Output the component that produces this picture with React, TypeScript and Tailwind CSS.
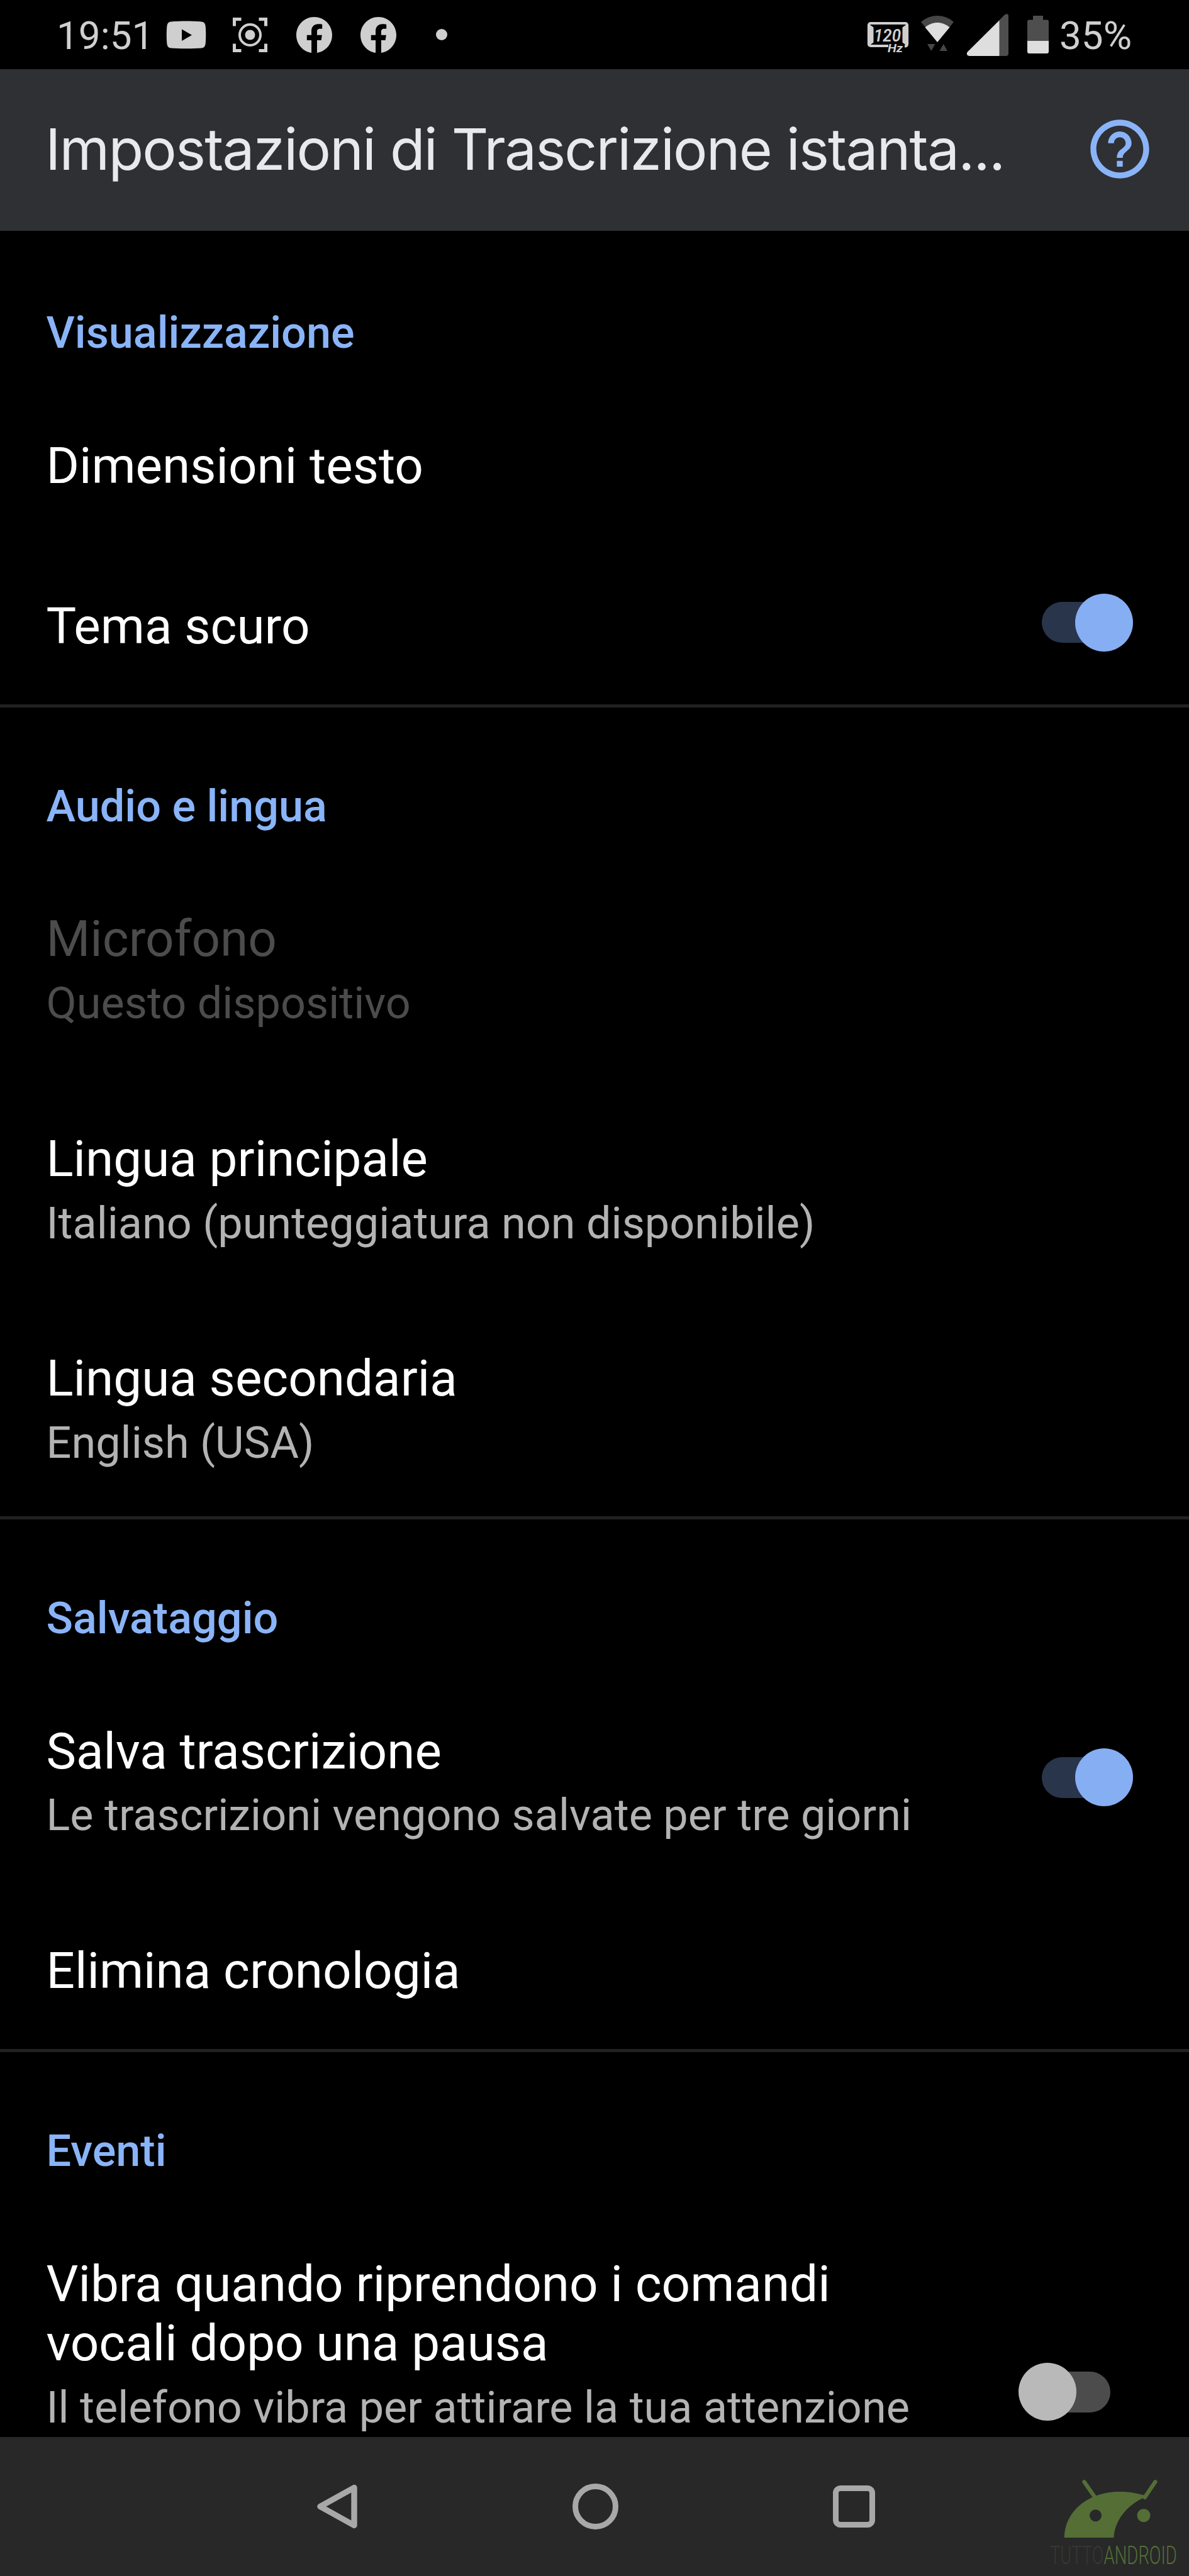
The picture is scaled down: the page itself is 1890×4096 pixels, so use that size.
import type { ReactNode } from 'react';
import { MdHelpOutline } from 'react-icons/md';

const YoutubeIcon = () => (
  <svg className="ml-[27px] h-[45px] w-[64px]" viewBox="0 0 64 45" fill="#cfcfcf">
    <path
      fillRule="evenodd"
      d="M8 1.500C20 .2 44 .2 56 1.500c4 .4 6 2.500 6.500 6 1 8 1 22 0 30-.5 3.500-2.500 5.600-6.500 6-12 1-36 1-48 0-4-.4-6-2.500-6.500-6-1-8-1-22 0-30C2 4 4 1.900 8 1.500ZM25 13.500v18.400l16-9.200Z"
    />
  </svg>
);

const CaptureIcon = () => (
  <svg className="ml-[42px] size-[55px]" viewBox="0 0 55 55" fill="none" stroke="#cfcfcf">
    <path d="M2.500 13.500v-11h11M41.500 2.500h11v11M52.500 41.500v11h-11M13.500 52.500h-11v-11" strokeWidth="5" />
    <circle cx="27.500" cy="27.500" r="16.500" strokeWidth="4" />
    <circle cx="27.500" cy="27.500" r="8" fill="#cfcfcf" stroke="none" />
  </svg>
);

const FacebookIcon = ({ className }: { className: string }) => (
  <svg className={className} viewBox="0 0 24 24" fill="#cfcfcf">
    <path d="M24 12.073C24 5.405 18.627 0 12 0S0 5.405 0 12.073C0 18.100 4.388 23.094 10.125 24v-8.437H7.078v-3.490h3.047v-2.660c0-3.025 1.792-4.697 4.533-4.697 1.312 0 2.686.236 2.686.236v2.971h-1.513c-1.491 0-1.956.93-1.956 1.886v2.264h3.328l-.532 3.490h-2.796V24C19.612 23.094 24 18.100 24 12.073Z" />
  </svg>
);

const RefreshRateIcon = () => (
  <svg className="mt-[8px] h-[48px] w-[65px] overflow-visible" viewBox="0 0 65 48">
    <path
      d="M33 38H5a3 3 0 0 1-3-3V5a3 3 0 0 1 3-3h55a3 3 0 0 1 3 3v30q0 3.500-4 3.500"
      fill="none"
      stroke="#cfcfcf"
      strokeWidth="4.200"
    />
    <path d="M3 5l5.500 4v23L3 36ZM62 5l-5.500 4v23l5.500 4Z" fill="#cfcfcf" stroke="#cfcfcf" strokeWidth="2" />
    <text
      x="10"
      y="30.500"
      fill="#cfcfcf"
      fontSize="27"
      fontWeight="600"
      fontStyle="italic"
      textLength="43"
      lengthAdjust="spacingAndGlyphs"
    >
      120
    </text>
    <text
      x="32"
      y="47.500"
      fill="#cfcfcf"
      fontSize="18"
      fontWeight="700"
      fontStyle="italic"
      textLength="24"
      lengthAdjust="spacingAndGlyphs"
    >
      Hz
    </text>
  </svg>
);

const WifiIcon = () => (
  <svg className="mb-[5px] ml-[19.500px] h-[56px] w-[52px]" viewBox="0 0 52 56">
    <path d="M0 10C15-3.300 37-3.300 52 10L26 42Z" fill="#464646" />
    <path d="M6.500 18.500C18 8.500 34 8.500 45.500 18.500L26 42Z" fill="#dedede" />
    <path d="M10 45h12.500l-6.200 11ZM29.500 56H42l-6.200-11Z" fill="#464646" />
  </svg>
);

const SignalIcon = () => (
  <svg className="ml-[21px] h-[67px] w-[66px]" viewBox="0 0 66 67">
    <path d="M60 1.500Q65.500-1.500 66 3v60q0 4-4 4H4Q-2.500 65.500 1 60.500Z" fill="#4e4e4e" />
    <path d="M51.500 10.500V67H4Q-2.500 65.500 1 60.500Z" fill="#dedede" />
  </svg>
);

const BatteryIcon = () => (
  <svg className="ml-[30.500px] h-[60px] w-[34px]" viewBox="0 0 34 60">
    <path d="M9 0h16v6.500h6a3 3 0 0 1 3 3V41H0V9.500a3 3 0 0 1 3-3h6Z" fill="#4e4e4e" />
    <path d="M0 40h34V57a3 3 0 0 1-3 3H3a3 3 0 0 1-3-3Z" fill="#dedede" />
  </svg>
);

const StatusBar = () => (
  <div className="flex h-[110px] items-center justify-between pr-[92px] pl-[90px] text-[62px] leading-none text-[#cfcfcf]">
    <div className="flex items-center">
      <span className="w-[147px] pt-1 whitespace-nowrap">19:51</span>
      <YoutubeIcon />
      <CaptureIcon />
      <FacebookIcon className="ml-[46px] size-[57px]" />
      <FacebookIcon className="ml-[45px] size-[57px]" />
      <span className="ml-[63px] size-[18px] rounded-full bg-[#cfcfcf]" />
    </div>
    <div className="flex items-center">
      <RefreshRateIcon />
      <WifiIcon />
      <SignalIcon />
      <BatteryIcon />
      <span className="ml-[17px] w-[114px] pt-1 whitespace-nowrap">35%</span>
    </div>
  </div>
);

const AppBar = () => (
  <header className="flex h-[257px] items-center justify-between bg-[#2f3034] pr-[54px] pb-[3px] pl-[72px]">
    <h1 className="font-['Inter'] text-[91px] leading-[110px] whitespace-nowrap text-[#e8e9ed] tracking-[-1.850px]">
      Impostazioni di Trascrizione istanta...
    </h1>
    <MdHelpOutline className="size-[112px] shrink-0 text-[#8ab4f8]" />
  </header>
);

const Switch = ({ on }: { on: boolean }) =>
  on ? (
    <span className="mr-[89px] mb-[7px] flex h-[92px] w-[145px] shrink-0 items-center self-center">
      <span className="h-[65px] w-[112px] rounded-full bg-[#29354b]" />
      <span className="-ml-[59px] size-[92px] shrink-0 rounded-full bg-[#86aef3]" />
    </span>
  ) : (
    <span className="mr-[125px] mb-[5px] flex h-[92px] w-[146px] shrink-0 items-center self-center">
      <span className="z-10 size-[92px] shrink-0 rounded-full bg-[#b9b9b9]" />
      <span className="-ml-[58px] h-[65px] w-[112px] shrink-0 rounded-full bg-[#4c4c4c]" />
    </span>
  );

type ItemProps = {
  title: ReactNode;
  summary?: string;
  disabled?: boolean;
  checked?: boolean;
  className?: string;
};

const Item = ({ title, summary, disabled, checked, className = '' }: ItemProps) => (
  <div
    className={`flex shrink-0 justify-between pt-[81.500px] pl-[73.500px] whitespace-nowrap ${
      summary ? 'min-h-[347.200px]' : 'min-h-[252.500px]'
    } ${className}`}
  >
    <div>
      <div
        className={`text-[80px] leading-[94.400px] ${disabled ? 'text-[#4c4c4c]' : 'text-white'}`}
      >
        {title}
      </div>
      {summary && (
        <div
          className={`mt-[12.500px] text-[70.200px] leading-[84px] ${
            disabled ? 'text-[#4c4c4c]' : 'text-[#b3b3b3]'
          }`}
        >
          {summary}
        </div>
      )}
    </div>
    {checked !== undefined && (
      <div className="-mt-[81.500px] flex">
        <Switch on={checked} />
      </div>
    )}
  </div>
);

type SectionProps = { title: string; first?: boolean; children: ReactNode };

const Section = ({ title, first, children }: SectionProps) => (
  <section className="shrink-0">
    <h2
      className={`h-[245px] border-t-[5px] pt-[110px] pl-[73.500px] text-[70.200px] leading-[94px] font-medium text-[#8ab4f8] ${
        first ? 'border-black' : 'border-[#212121]'
      }`}
    >
      {title}
    </h2>
    <div className="flex flex-col gap-[2.500px]">{children}</div>
  </section>
);

const AndroidLogo = () => (
  <svg className="absolute right-0 bottom-0 h-[197px] w-[276px] overflow-visible" viewBox="0 0 840 600">
    <g stroke="#546e36" strokeWidth="19" strokeLinecap="round">
      <path d="M333 144 387 222M677 144 626 219" />
    </g>
    <path d="M237 414C240 282 356 192 505 192c50 0 90 8 133 22-90 34-158 112-162 200Z" fill="#546e36" />
    <circle cx="388" cy="307" r="29" fill="#282828" />
    <circle cx="621" cy="307" r="32" fill="#546e36" />
    <text x="167" y="542" fill="#373737" fontSize="122" fontWeight="300" textLength="260" lengthAdjust="spacingAndGlyphs">
      TUTTO
    </text>
    <text x="428" y="542" fill="#546e36" fontSize="122" fontWeight="300" textLength="354" lengthAdjust="spacingAndGlyphs">
      ANDROID
    </text>
  </svg>
);

const NavBar = () => (
  <nav className="relative flex h-[221.500px] shrink-0 items-center bg-[#282828] pl-[503px]">
    <svg className="h-[73px] w-[65px]" viewBox="0 0 65 73" fill="none" stroke="#a8a8a8" strokeWidth="9.400" strokeLinejoin="round">
      <path d="M60 6.500v60L6 36.500Z" />
    </svg>
    <span className="ml-[341.500px] size-[73px] rounded-full border-[9.400px] border-[#a8a8a8]" />
    <span className="ml-[341.500px] size-[67px] rounded-[12px] border-[9.400px] border-[#a8a8a8]" />
    <AndroidLogo />
  </nav>
);

export default function App() {
  return (
    <div className="flex h-[4096px] w-[1890px] flex-col overflow-hidden bg-black font-['Roboto',sans-serif]">
      <StatusBar />
      <AppBar />
      <main className="flex min-h-0 flex-1 flex-col overflow-hidden">
        <Section title="Visualizzazione" first>
          <Item title="Dimensioni testo" />
          <Item title="Tema scuro" checked />
        </Section>
        <Section title="Audio e lingua">
          <Item title="Microfono" summary="Questo dispositivo" disabled />
          <Item title="Lingua principale" summary="Italiano (punteggiatura non disponibile)" />
          <Item title="Lingua secondaria" summary="English (USA)" />
        </Section>
        <Section title="Salvataggio">
          <Item title="Salva trascrizione" summary="Le trascrizioni vengono salvate per tre giorni" checked />
          <Item title="Elimina cronologia" />
        </Section>
        <Section title="Eventi">
          <Item
            title={
              <>
                Vibra quando riprendono i comandi
                <br />
                vocali dopo una pausa
              </>
            }
            summary="Il telefono vibra per attirare la tua attenzione"
            checked={false}
            className="h-[605px]"
          />
        </Section>
      </main>
      <NavBar />
    </div>
  );
}
